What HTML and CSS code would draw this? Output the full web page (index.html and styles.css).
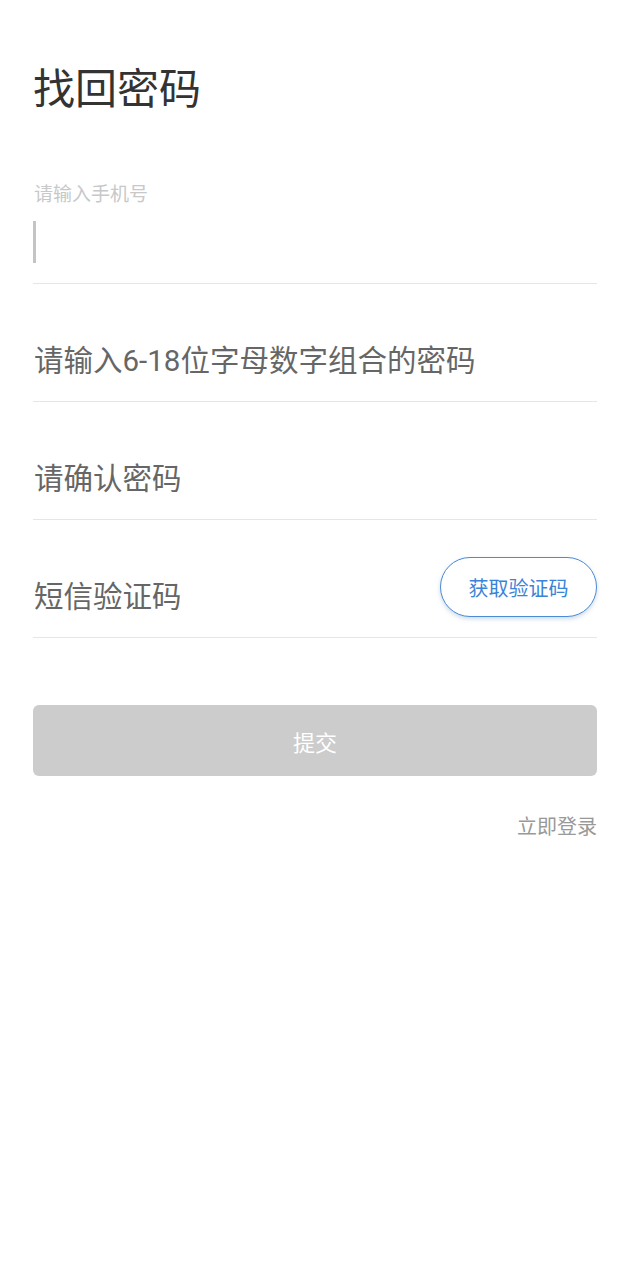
FILE: index.html
```html
<!DOCTYPE html>
<html lang="zh-CN">

<head>
    <meta charset="UTF-8">
    <meta name="viewport" content="width=device-width, initial-scale=1.0">
    <title>找回密码</title>
    <link rel="stylesheet" href="styles.css">
</head>

<body>

    <div class="container">
        <h1>找回密码</h1>
        <form id="resetForm">
            <div class="form-input">
                <label for="phone">请输入手机号</label>
                <div class="input-box">
                    <span class="caret"></span>
                    <input id="phone" type="tel">
                </div>
            </div>
            <div class="form-input">
                <input id="password" type="password" placeholder="请输入6-18位字母数字组合的密码">
            </div>
            <div class="form-input">
                <input id="confirmPassword" type="password" placeholder="请确认密码">
            </div>
            <div class="form-input form-code">
                <input id="code" type="text" placeholder="短信验证码">
                <button type="button" class="btn-code">获取验证码</button>
            </div>
            <button type="submit" id="btn" class="disable" disabled>提交</button>
        </form>
        <div class="login-link">
            <a href="#">立即登录</a>
        </div>
    </div>

</body>

</html>
```

FILE: styles.css
```css
* {
    padding: 0;
    margin: 0;
    box-sizing: border-box;
}

body {
    background-color: #fff;
    font-family: Roboto, "Noto Sans CJK SC", sans-serif;
}

.container {
    padding: 0 33px;
}

h1 {
    padding-top: 60px;
    font-size: 42px;
    line-height: 60px;
    font-weight: 400;
    color: #333;
    margin-bottom: 46px;
}

.form-input {
    height: 118px;
    border-bottom: 1px solid #e6e6e6;
    display: flex;
    flex-direction: column;
    justify-content: flex-end;
    padding-bottom: 20px;
}

.form-input label {
    display: block;
    font-size: 19px;
    line-height: 24px;
    color: #c8c8c8;
    margin-bottom: 14px;
    padding-left: 1px;
}

.input-box {
    position: relative;
    height: 42px;
}

.caret {
    position: absolute;
    left: 0;
    top: 0;
    width: 3px;
    height: 42px;
    background-color: #c4c4c4;
}

input {
    border: none;
    outline: none;
    width: 100%;
    height: 42px;
    line-height: 42px;
    padding-left: 1px;
    font-family: inherit;
    font-size: 29.5px;
    color: #666;
    background: transparent;
}

input::placeholder {
    color: #666;
}

.form-input > input {
    margin-bottom: -1px;
}

.form-code {
    flex-direction: row;
    align-items: flex-end;
}

.form-code input {
    flex: 1;
}

.btn-code {
    flex: none;
    width: 157px;
    height: 60px;
    border: 1px solid #4a8ad6;
    border-radius: 30px;
    background-color: #fff;
    color: #3a83d8;
    font-family: inherit;
    font-size: 20px;
    box-shadow: 0 2px 4px rgba(60, 110, 170, 0.25);
}

#btn {
    display: block;
    width: 100%;
    height: 71px;
    margin-top: 67px;
    border: none;
    outline: none;
    border-radius: 6px;
    background-color: #3a83d8;
    color: #fff;
    font-family: inherit;
    font-size: 22px;
}

.disable {
    background-color: #cccccc !important;
}

.login-link {
    text-align: right;
    margin-top: 37px;
}

.login-link a {
    font-size: 20px;
    line-height: 28px;
    color: #999;
    text-decoration: none;
}
```
